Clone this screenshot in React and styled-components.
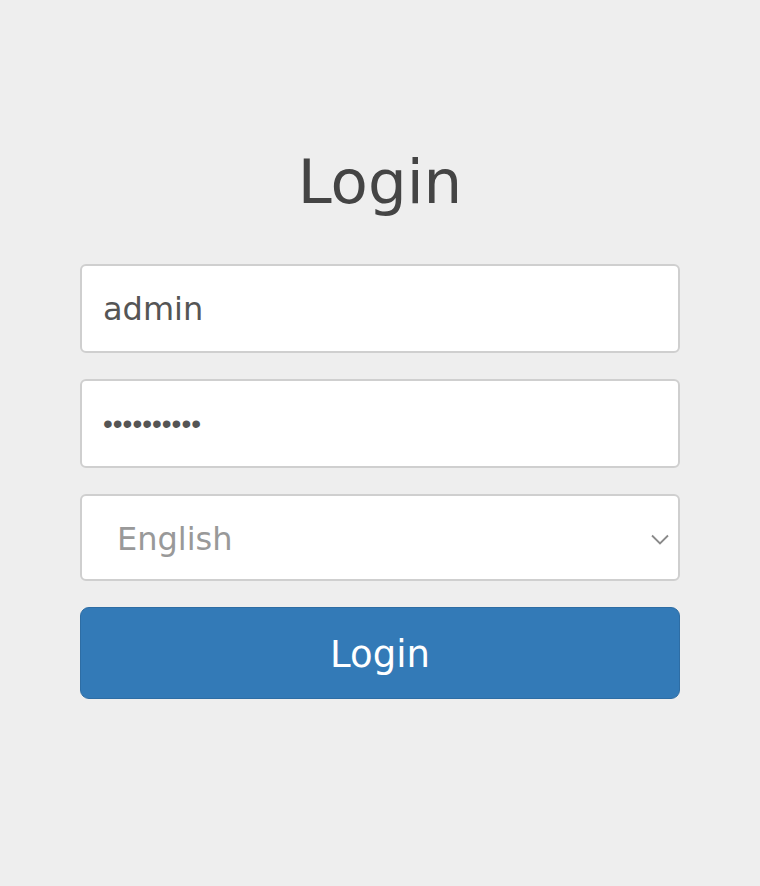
import styled, { createGlobalStyle } from "styled-components";

const GlobalStyle = createGlobalStyle`
  html, body {
    margin: 0;
    padding: 0;
    background: #eeeeee;
  }
  body {
    font-family: "DejaVu Sans", "Liberation Sans", sans-serif;
  }
  * {
    box-sizing: border-box;
  }
`;

export default function App() {
  return (
    <Page>
      <GlobalStyle />
      <LoginForm onSubmit={(e) => e.preventDefault()}>
        <Title>Login</Title>
        <Fields>
          <Input type="text" defaultValue="admin" />
          <Input password type="password" defaultValue="1234567890" />
          <SelectWrap>
            <Select defaultValue="en">
              <option value="en">English</option>
              <option value="de">Deutsch</option>
              <option value="fr">Français</option>
            </Select>
            <Chevron width="18" height="11" viewBox="0 0 18 11">
              <path
                d="M1 1.5 L9 9.5 L17 1.5"
                fill="none"
                stroke="#8a8a8a"
                strokeWidth="1.8"
              />
            </Chevron>
          </SelectWrap>
          <Button type="submit">Login</Button>
        </Fields>
      </LoginForm>
    </Page>
  );
}

const Page = styled.main`
  min-height: 886px;
  padding-top: 152px;
`;

const LoginForm = styled.form`
  width: 600px;
  margin: 0 auto;
  display: flex;
  flex-direction: column;
`;

const Title = styled.h1`
  margin: 0 0 52px;
  text-align: center;
  font-weight: 400;
  font-size: 61px;
  line-height: 60px;
  color: #444444;
`;

const Fields = styled.div`
  display: flex;
  flex-direction: column;
  gap: 26px;
`;

const Input = styled.input`
  width: 100%;
  height: 89px;
  padding: 0 21px;
  border: 2px solid #cfcfcf;
  border-radius: 6px;
  background: #ffffff;
  color: #555555;
  font-family: ${(props) =>
    props.password ? '"Liberation Sans", sans-serif' : '"DejaVu Sans", sans-serif'};
  font-size: ${(props) => (props.password ? "28px" : "32px")};
  outline: none;
`;

const SelectWrap = styled.div`
  position: relative;
`;

const Select = styled.select`
  appearance: none;
  width: 100%;
  height: 87px;
  padding: 2px 35px 0;
  border: 2px solid #cfcfcf;
  border-radius: 6px;
  background: #ffffff;
  color: #999999;
  font-family: "DejaVu Sans", sans-serif;
  font-size: 32px;
  outline: none;
`;

const Chevron = styled.svg`
  position: absolute;
  right: 11px;
  top: 40px;
  pointer-events: none;
`;

const Button = styled.button`
  width: 100%;
  height: 92px;
  padding-top: 4px;
  border: 1px solid #2e6da4;
  border-radius: 9px;
  background: #337ab7;
  color: #ffffff;
  font-family: "DejaVu Sans", sans-serif;
  font-size: 37px;
  cursor: pointer;
`;
